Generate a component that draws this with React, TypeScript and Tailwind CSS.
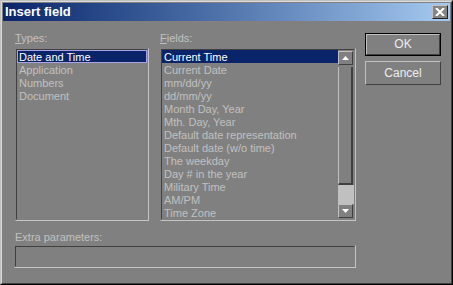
import React from "react";

const types = ["Date and Time", "Application", "Numbers", "Document"];
const fields = [
  "Current Time",
  "Current Date",
  "mm/dd/yy",
  "dd/mm/yy",
  "Month Day, Year",
  "Mth. Day, Year",
  "Default date representation",
  "Default date (w/o time)",
  "The weekday",
  "Day # in the year",
  "Military Time",
  "AM/PM",
  "Time Zone",
];

function Sunken({ className, children }: { className?: string; children?: React.ReactNode }) {
  return (
    <div className={"border border-t-[#808080] border-l-[#808080] border-r-[#c4c4c4] border-b-[#c4c4c4] " + (className ?? "")}>
      <div className="h-full w-full border border-t-[#404040] border-l-[#404040] border-r-[#808080] border-b-[#808080]">
        {children}
      </div>
    </div>
  );
}

function Arrow({ up }: { up?: boolean }) {
  return (
    <svg width="7" height="4" viewBox="0 0 7 4">
      {up ? <polygon points="0,4 7,4 3.5,0" fill="#ffffff" /> : <polygon points="0,0 7,0 3.5,4" fill="#ffffff" />}
    </svg>
  );
}

function ScrollBtn({ up }: { up?: boolean }) {
  return (
    <div className="h-[14px] w-[15px] flex items-center justify-center border border-t-[#c0c0c0] border-l-[#c0c0c0] border-r-[#404040] border-b-[#404040]">
      <Arrow up={up} />
    </div>
  );
}

export default function App() {
  return (
    <div
      className="w-[453px] h-[285px] bg-[#808080] border border-t-[#c0c0c0] border-l-[#c0c0c0] border-r-black border-b-black text-[11px] leading-[13px] text-[#c0c0c0]"
      style={{ fontFamily: '"Liberation Sans", Arial, sans-serif' }}
    >
      <div className="h-full flex flex-col border border-t-[#dcdcdc] border-l-[#dcdcdc] border-r-[#404040] border-b-[#404040] p-px">
        {/* Title bar */}
        <div className="h-[18px] flex items-center justify-between bg-gradient-to-r from-[#0a246a] to-[#a6caf0] pl-[2px] pr-[2px]">
          <span className="text-white font-bold text-[13px] leading-[18px]">Insert field</span>
          <div className="w-[16px] h-[14px] flex items-center justify-center border border-t-[#c0c0c0] border-l-[#c0c0c0] border-r-[#202020] border-b-[#202020] bg-[#858585]">
            <svg width="10" height="8" viewBox="0 0 10 8">
              <path d="M1 0 L9 8 M9 0 L1 8" stroke="#ffffff" strokeWidth="2" />
            </svg>
          </div>
        </div>

        {/* Body */}
        <div className="flex-1 flex pl-[12px] pt-[11px]">
          <div className="w-[341px] flex flex-col">
            <div className="flex gap-[11px]">
              {/* Types */}
              <div className="w-[134px] flex flex-col">
                <div className="h-[13px] mb-[3px]">
                  <span className="underline">T</span>ypes:
                </div>
                <Sunken className="h-[173px]">
                  <div className="flex flex-col">
                    {types.map((t, i) =>
                      i === 0 ? (
                        <div key={t} className="h-[13px] bg-[#0a246a] text-white border border-[#a9a3e6] pl-px leading-[12px]">
                          {t}
                        </div>
                      ) : (
                        <div key={t} className="h-[13px] pl-[2px] leading-[14px]">
                          {t}
                        </div>
                      )
                    )}
                  </div>
                </Sunken>
              </div>

              {/* Fields */}
              <div className="w-[196px] flex flex-col">
                <div className="h-[13px] mb-[3px]">
                  <span className="underline">F</span>ields:
                </div>
                <Sunken className="h-[173px]">
                  <div className="flex h-full">
                    <div className="flex-1 flex flex-col overflow-hidden">
                      {fields.map((f, i) => (
                        <div
                          key={f}
                          className={"h-[13px] shrink-0 whitespace-nowrap pl-[2px] leading-[14px] " + (i === 0 ? "bg-[#0a246a] text-white" : "")}
                        >
                          {f}
                        </div>
                      ))}
                    </div>
                    <div className="w-[16px] flex flex-col pt-px pb-px">
                      <ScrollBtn up />
                      <div className="flex-1 mt-[2px] border-l border-l-[#c0c0c0] border-r-2 border-r-[#404040] border-b-2 border-b-[#404040] w-[15px]" />
                      <div className="h-[19px] w-[16px] bg-[#c0c0c0]" />
                      <ScrollBtn />
                    </div>
                  </div>
                </Sunken>
              </div>
            </div>

            <div className="h-[13px] mt-[10px] mb-px">Extra parameters:</div>
            <Sunken className="h-[23px] w-[342px] -ml-px" />
          </div>

          {/* Buttons */}
          <div className="ml-[9px] pt-px flex flex-col gap-[5px]">
            <div className="w-[76px] h-[23px] border border-black">
              <div className="h-full flex items-center justify-center border border-t-[#c0c0c0] border-l-[#c0c0c0] border-r-[#404040] border-b-[#404040] text-[#eeeeee] text-[12px]">
                OK
              </div>
            </div>
            <div className="w-[76px] h-[24px] flex items-center justify-center border border-t-[#c0c0c0] border-l-[#c0c0c0] border-r-[#404040] border-b-[#404040] text-[#eeeeee] text-[12px]">
              Cancel
            </div>
          </div>
        </div>
      </div>
    </div>
  );
}
